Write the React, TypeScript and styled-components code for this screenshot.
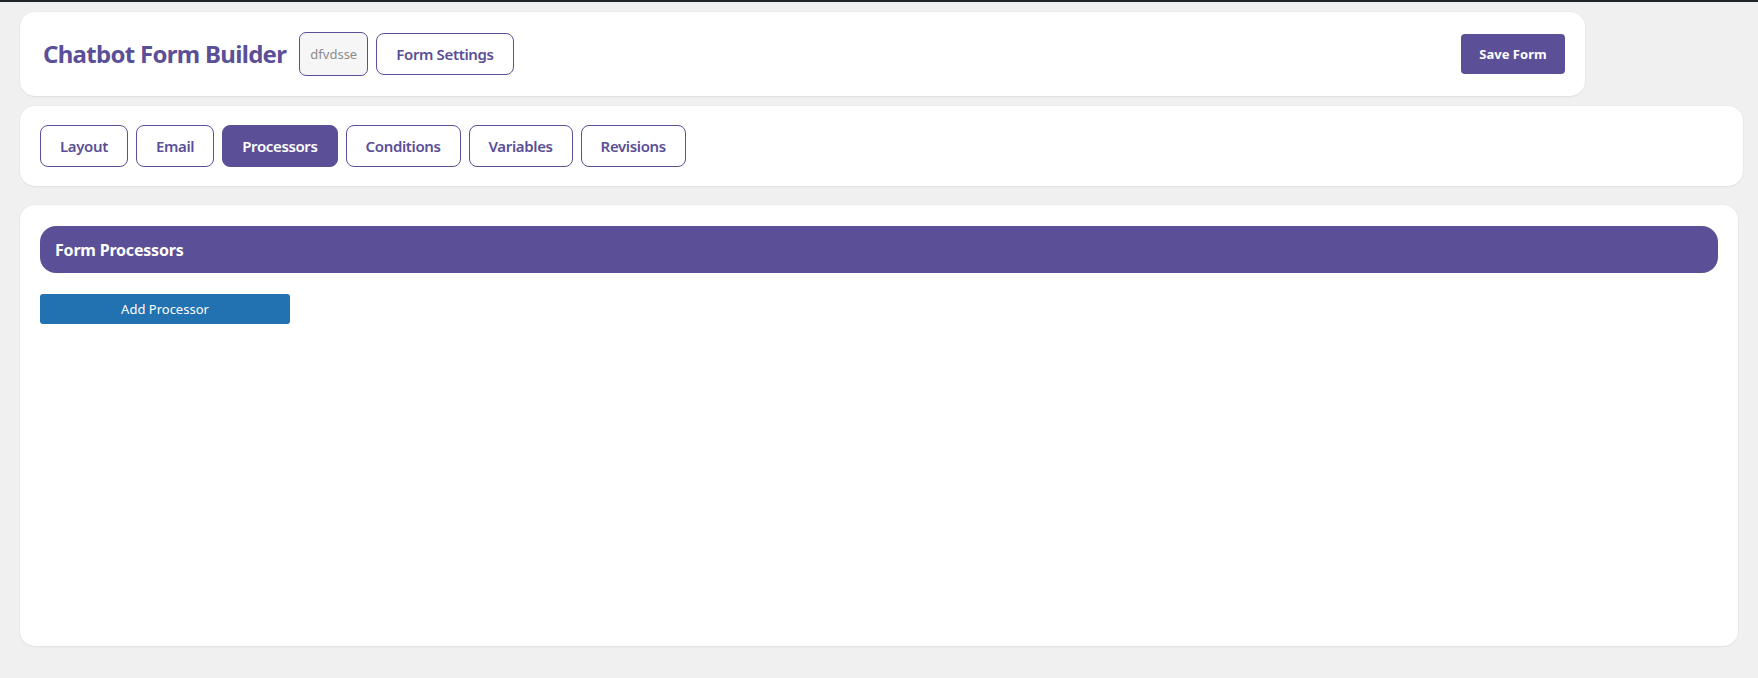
import React from "react";
import styled, { createGlobalStyle } from "styled-components";

const PURPLE = "#5b4f97";

const GlobalStyle = createGlobalStyle`
  html, body {
    margin: 0;
    padding: 0;
    background: #f0f0f1;
    font-family: "Noto Sans", "Open Sans", Arial, sans-serif;
  }
  * { box-sizing: border-box; }
`;

const TopStrip = styled.div`
  height: 2px;
  background: #1d2327;
`;

const Page = styled.div`
  display: flex;
  flex-direction: column;
  align-items: flex-start;
  padding: 10px 15px 32px 20px;
`;

const Card = styled.div<{ $width?: string; $mt?: number }>`
  background: #fff;
  border-radius: 15px;
  width: ${(p) => p.$width ?? "100%"};
  margin-top: ${(p) => p.$mt ?? 0}px;
  box-shadow: 0 0 0 1px rgba(0, 0, 0, 0.02), 0 1px 2px rgba(0, 0, 0, 0.05);
`;

const HeaderBar = styled(Card)`
  height: 84px;
  display: flex;
  align-items: center;
  padding: 0 20px 0 23px;
`;

const Title = styled.h1`
  margin: 0 13px 0 0;
  font-size: 24px;
  font-weight: 700;
  color: ${PURPLE};
  letter-spacing: -0.7px;
  line-height: 1;
`;

const NameInput = styled.input`
  width: 69px;
  height: 44px;
  border: 1px solid ${PURPLE};
  border-radius: 7px;
  background: #f6f6f6;
  color: #8c8c8c;
  font-family: inherit;
  font-size: 13px;
  text-align: center;
  padding: 0 4px;
  margin-right: 8px;
  outline: none;
`;

const OutlineButton = styled.button<{ $active?: boolean }>`
  height: 42px;
  padding: 0 19px;
  border: 1px solid ${PURPLE};
  border-radius: 8px;
  background: ${(p) => (p.$active ? PURPLE : "#fff")};
  color: ${(p) => (p.$active ? "#fff" : PURPLE)};
  font-family: inherit;
  font-size: 15px;
  font-weight: 600;
  letter-spacing: -0.36px;
  cursor: pointer;
  white-space: nowrap;
`;

const SaveButton = styled.button`
  margin-left: auto;
  width: 104px;
  height: 40px;
  border: none;
  border-radius: 4px;
  background: ${PURPLE};
  color: #fff;
  font-family: inherit;
  font-size: 13px;
  font-weight: 700;
  cursor: pointer;
`;

const TabsBar = styled(Card)`
  height: 80px;
  display: flex;
  align-items: center;
  gap: 8px;
  padding: 0 20px;
`;

const MainCard = styled(Card)`
  height: 441px;
  padding: 21px 20px;
  display: flex;
  flex-direction: column;
  align-items: flex-start;
`;

const SectionHeader = styled.div`
  width: 100%;
  height: 47px;
  background: ${PURPLE};
  border-radius: 16px;
  display: flex;
  align-items: center;
  padding-left: 15px;
  color: #fff;
  font-size: 16px;
  font-weight: 700;
  letter-spacing: -0.2px;
`;

const PrimaryButton = styled.button`
  margin-top: 21px;
  width: 250px;
  height: 30px;
  border: none;
  border-radius: 3px;
  background: #2271b1;
  color: #fff;
  font-family: inherit;
  font-size: 13px;
  cursor: pointer;
`;

const tabs = ["Layout", "Email", "Processors", "Conditions", "Variables", "Revisions"];

export default function App() {
  return (
    <>
      <GlobalStyle />
      <TopStrip />
      <Page>
        <HeaderBar $width="1565px">
          <Title>Chatbot Form Builder</Title>
          <NameInput defaultValue="dfvdsse" />
          <OutlineButton>Form Settings</OutlineButton>
          <SaveButton>Save Form</SaveButton>
        </HeaderBar>
        <TabsBar $width="1723px" $mt={10}>
          {tabs.map((t) => (
            <OutlineButton key={t} $active={t === "Processors"}>
              {t}
            </OutlineButton>
          ))}
        </TabsBar>
        <MainCard $width="1718px" $mt={19}>
          <SectionHeader>Form Processors</SectionHeader>
          <PrimaryButton>Add Processor</PrimaryButton>
        </MainCard>
      </Page>
    </>
  );
}
